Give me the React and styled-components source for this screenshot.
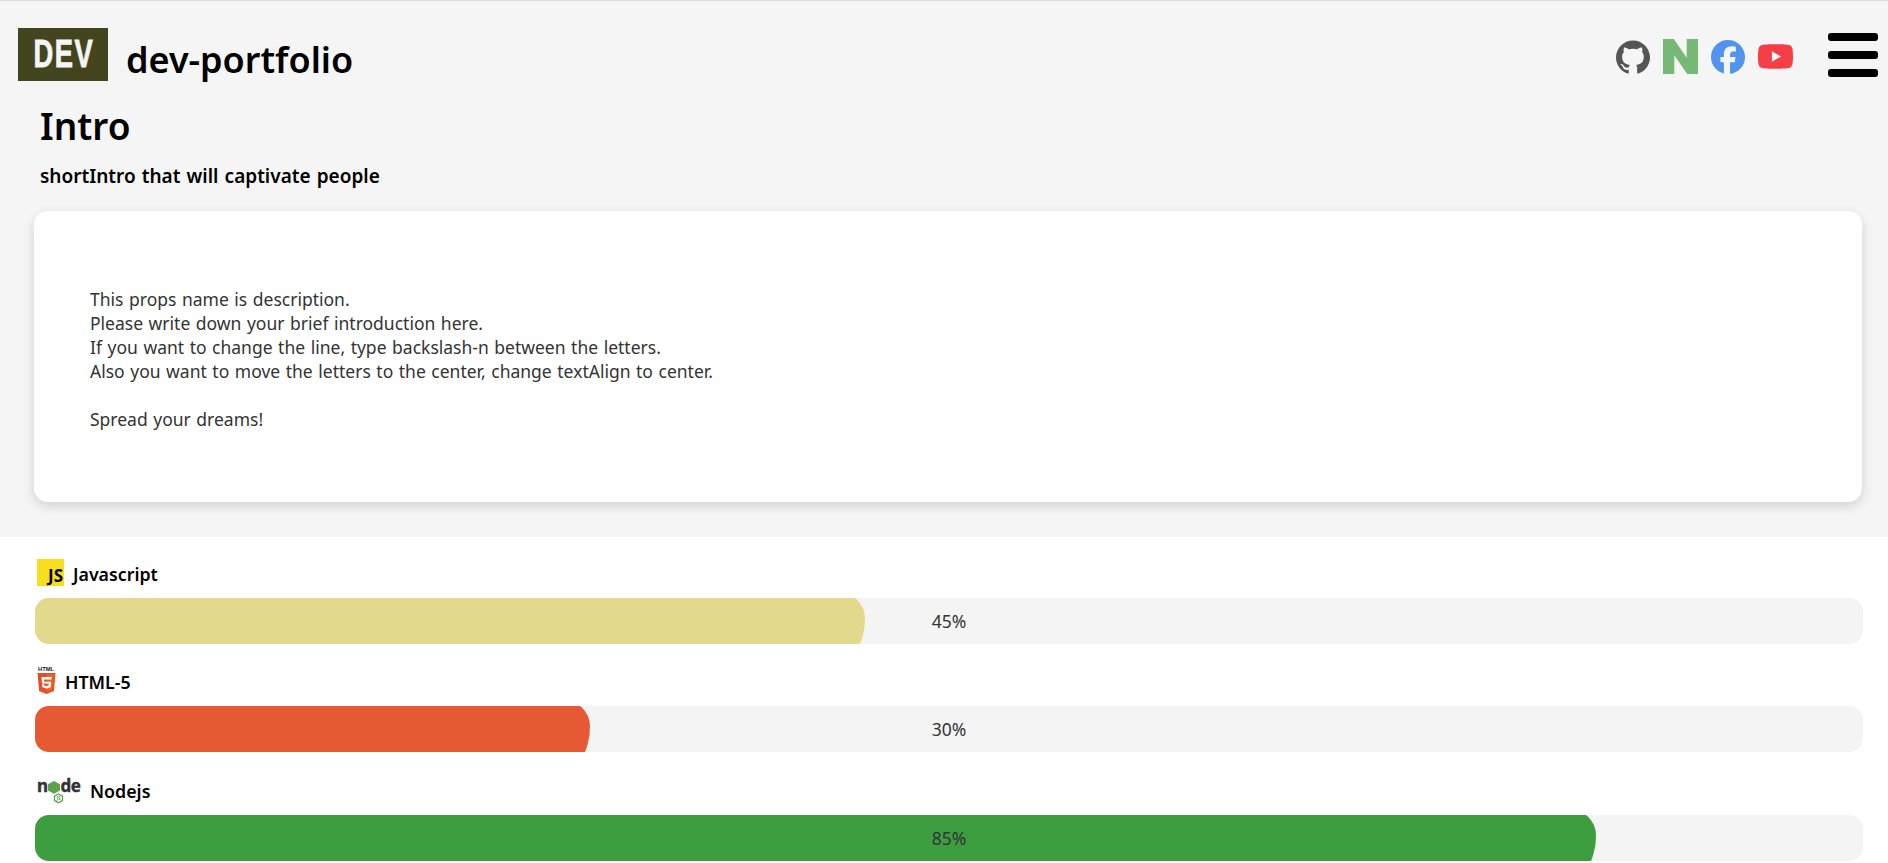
import React from 'react'
import styled, { createGlobalStyle } from 'styled-components'
import { SiGithub, SiNaver, SiFacebook, SiYoutube } from 'react-icons/si'

const GlobalStyle = createGlobalStyle`
  html, body {
    margin: 0;
    height: 863px;
    overflow: hidden;
    background: #fff;
    font-family: "Noto Sans", "Noto Sans CJK KR", sans-serif;
    color: #000;
  }
`

const Hero = styled.section`
  height: 537px;
  box-sizing: border-box;
  background: #f5f5f5;
  border-top: 1px solid #dcdcdc;
`

const Header = styled.header`
  display: flex;
  align-items: center;
  height: 53px;
  padding: 27px 10px 20px 18px;
`

const Logo = styled.div`
  width: 90px;
  height: 53px;
  display: flex;
  align-items: center;
  justify-content: center;
  background: #43451f;
`

const LogoText = styled.span`
  padding-left: 2px;
  font-family: "Liberation Sans", sans-serif;
  font-weight: 700;
  font-size: 38px;
  letter-spacing: 2px;
  color: #f5f5f5;
  -webkit-text-stroke: 0.8px #f5f5f5;
  transform: scaleX(0.72);
`

const Title = styled.h1`
  margin: 10px 0 0 18px;
  font-size: 36px;
  font-weight: 600;
  line-height: 53px;
  flex: 1;
`

const Socials = styled.nav`
  display: flex;
  align-items: center;
  gap: 13px;
  margin: 4px 35px 0 0;
`

const SocialLink = styled.a`
  display: flex;
  color: ${p => p.$color};
`

const Burger = styled.div`
  display: flex;
  flex-direction: column;
  gap: 10px;
  width: 50px;
`

const BurgerLine = styled.span`
  height: 8px;
  border-radius: 3px;
  background: #000;
`

const Heading = styled.h2`
  margin: 0 0 0 40px;
  font-size: 37px;
  font-weight: 600;
  line-height: 50px;
`

const SubHeading = styled.p`
  margin: 12px 0 0 40px;
  font-size: 19px;
  font-weight: 600;
  line-height: 26px;
  word-spacing: 1.2px;
`

const Card = styled.div`
  margin: 22px 26px 0 34px;
  height: 291px;
  box-sizing: border-box;
  padding: 76px 56px 0;
  background: #fff;
  border-radius: 14px;
  box-shadow: 0 4px 12px rgba(0, 0, 0, 0.15);
  font-size: 17.5px;
  line-height: 24px;
  word-spacing: 1px;
  color: #333;
  white-space: pre-line;
`

const Skills = styled.section`
  display: flex;
  flex-direction: column;
  gap: 23.4px;
  padding: 22px 25px 0 35px;
`

const SkillLabel = styled.div`
  display: flex;
  align-items: center;
  gap: 9px;
  height: 30px;
  margin-bottom: 9px;
  padding-left: 2px;
  font-size: 17.8px;
  font-weight: 600;
`

const Track = styled.div`
  display: grid;
  height: 46px;
  background: #f4f4f4;
  border-radius: 14px;
  overflow: hidden;
`

// taller than the track on purpose, the track clips the arc so it meets the edges at an angle
const Fill = styled.div`
  grid-area: 1 / 1;
  margin: -6px 0 -18px;
  background: ${p => p.$color};
  border-radius: 0 28px 26px 0 / 0 26px 44px 0;
`

const Percent = styled.span`
  grid-area: 1 / 1;
  align-self: center;
  justify-self: center;
  font-size: 17.5px;
  color: #333;
  z-index: 1;
`

const JsBadge = styled.div`
  width: 27px;
  height: 27px;
  margin-bottom: 3px;
  display: flex;
  align-items: flex-end;
  justify-content: flex-end;
  background: #f7df1e;
  font-size: 17px;
  font-weight: 700;
  line-height: 18px;
  padding: 0 1px 1px 0;
  box-sizing: border-box;
`

const HtmlSvg = styled.svg`
  margin-bottom: 4px;
`

const JsIcon = () => <JsBadge>JS</JsBadge>

const HtmlIcon = () => (
  <HtmlSvg width="19" height="28" viewBox="0 0 19 28">
    <text x="1" y="5" fontSize="5.8" fontWeight="700" fontFamily="Liberation Sans" fill="#222">HTML</text>
    <path d="M0.5 7h18l-1.600 18-7.400 3-7.400-3z" fill="#e44d26" />
    <path d="M9.500 8.500h7.200l-1.400 15.500-5.800 2z" fill="#f16529" />
    <path d="M4.500 11h10l-.2 2.400H7.100l.2 2.300h6.800l-.5 5.600-4.100 1.300-4.100-1.300-.3-3h2.200l.1 1.400 2.100.6 2.100-.6.2-2.300H5z" fill="#fff" />
  </HtmlSvg>
)

const NodeIcon = () => (
  <svg width="44" height="36" viewBox="0 -6 44 36">
    <text x="0" y="13" fontSize="17" fontWeight="700" fontFamily="Noto Sans" stroke="#333" strokeWidth="0.4" fill="#333">n</text>
    <path d="M17 2l6 3.200v6.400l-6 3.200-6-3.200V5.200z" fill="#5fa04e" />
    <text x="23.500" y="13" fontSize="17" fontWeight="700" fontFamily="Noto Sans" letterSpacing="-0.5" stroke="#333" strokeWidth="0.4" fill="#333">de</text>
    <path d="M21.500 15l4 2.200v4.400l-4 2.200-4-2.200v-4.400z" fill="none" stroke="#5fa04e" strokeWidth="1.200" />
    <text x="21.500" y="21.300" fontSize="4.500" textAnchor="middle" fontWeight="700" fontFamily="Noto Sans" fill="#5fa04e">JS</text>
  </svg>
)

const skills = [
  { name: 'Javascript', icon: <JsIcon />, value: 45, color: '#e2d98c' },
  { name: 'HTML-5', icon: <HtmlIcon />, value: 30, color: '#e55a32' },
  { name: 'Nodejs', icon: <NodeIcon />, value: 85, color: '#3c9e3f' },
]

const description = `This props name is description.
Please write down your brief introduction here.
If you want to change the line, type backslash-n between the letters.
Also you want to move the letters to the center, change textAlign to center.

Spread your dreams!`

export default function App() {
  return (
    <>
      <GlobalStyle />
      <Hero>
        <Header>
          <Logo><LogoText>DEV</LogoText></Logo>
          <Title>dev-portfolio</Title>
          <Socials>
            <SocialLink $color="#555"><SiGithub size={34} /></SocialLink>
            <SocialLink $color="#76b876"><SiNaver size={35} /></SocialLink>
            <SocialLink $color="#4f94ef"><SiFacebook size={34} /></SocialLink>
            <SocialLink $color="#f63f45"><SiYoutube size={35} /></SocialLink>
          </Socials>
          <Burger>
            <BurgerLine />
            <BurgerLine />
            <BurgerLine />
          </Burger>
        </Header>
        <Heading>Intro</Heading>
        <SubHeading>shortIntro that will captivate people</SubHeading>
        <Card>{description}</Card>
      </Hero>
      <Skills>
        {skills.map(s => (
          <div key={s.name}>
            <SkillLabel>{s.icon}{s.name}</SkillLabel>
            <Track>
              <Fill $color={s.color} style={{ width: `calc(${s.value}% + 7px)` }} />
              <Percent>{s.value}%</Percent>
            </Track>
          </div>
        ))}
      </Skills>
    </>
  )
}
